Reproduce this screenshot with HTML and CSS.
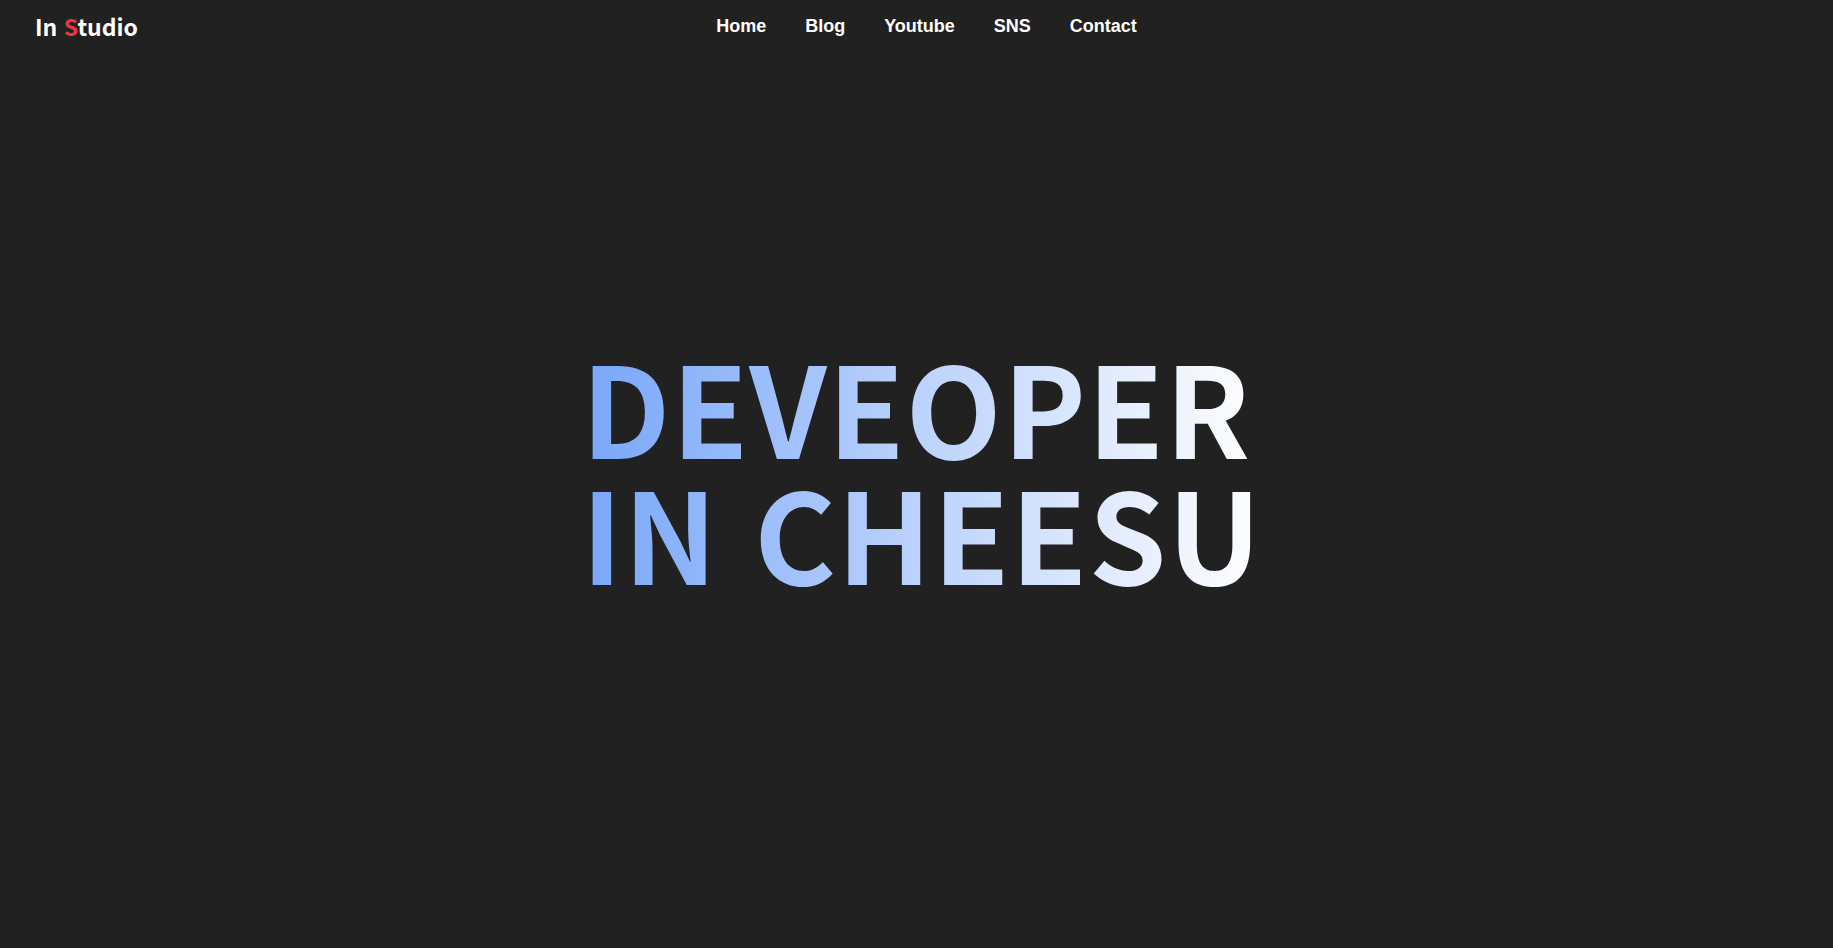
FILE: index.html
```html
<!DOCTYPE html>
<html lang="ko">
<head>
<meta charset="utf-8">
<title>In Studio</title>
<link rel="stylesheet" href="styles.css">
</head>
<body>
<header class="header">
  <a class="logo" href="#">In <span class="logo-accent">S</span>tudio</a>
  <nav class="nav">
    <a class="nav-link" href="#">Home</a>
    <a class="nav-link" href="#">Blog</a>
    <a class="nav-link" href="#">Youtube</a>
    <a class="nav-link" href="#">SNS</a>
    <a class="nav-link" href="#">Contact</a>
  </nav>
  <div class="header-spacer"></div>
</header>
<main class="hero">
  <h1 class="hero-title">DEVEOPER<br>IN CHEESU</h1>
</main>
</body>
</html>
```

FILE: styles.css
```css
* { box-sizing: border-box; }
html, body { margin: 0; padding: 0; }
body {
  background: #212121;
  color: #fff;
  height: 948px;
  overflow: hidden;
  position: relative;
}
.header {
  position: absolute;
  top: 0; left: 0; right: 0;
  display: grid;
  grid-template-columns: 1fr auto 1fr;
  align-items: center;
  height: 52px;
  padding: 0 35px;
  z-index: 2;
}
.logo {
  font-family: "Noto Sans CJK KR", "Noto Sans", sans-serif;
  font-weight: 700;
  font-size: 23px;
  color: #fff;
  text-decoration: none;
  justify-self: start;
}
.logo-accent { color: #e8373f; }
.nav {
  display: flex;
  gap: 39px;
  padding-left: 20px;
}
.nav-link {
  font-family: "Liberation Sans", Arial, sans-serif;
  font-weight: 700;
  font-size: 18px;
  color: #fff;
  text-decoration: none;
}
.hero {
  height: 948px;
  display: flex;
  align-items: center;
  justify-content: center;
  padding-bottom: 12px;
  padding-left: 10px;
}
.hero-title {
  margin: 0;
  font-family: "Noto Sans CJK KR", "Noto Sans", sans-serif;
  font-weight: 700;
  font-size: 125px;
  line-height: 126px;
  letter-spacing: 1px;
  text-align: left;
  background: linear-gradient(to right, #78a6f9, #ffffff);
  -webkit-background-clip: text;
  background-clip: text;
  color: transparent;
}
```
